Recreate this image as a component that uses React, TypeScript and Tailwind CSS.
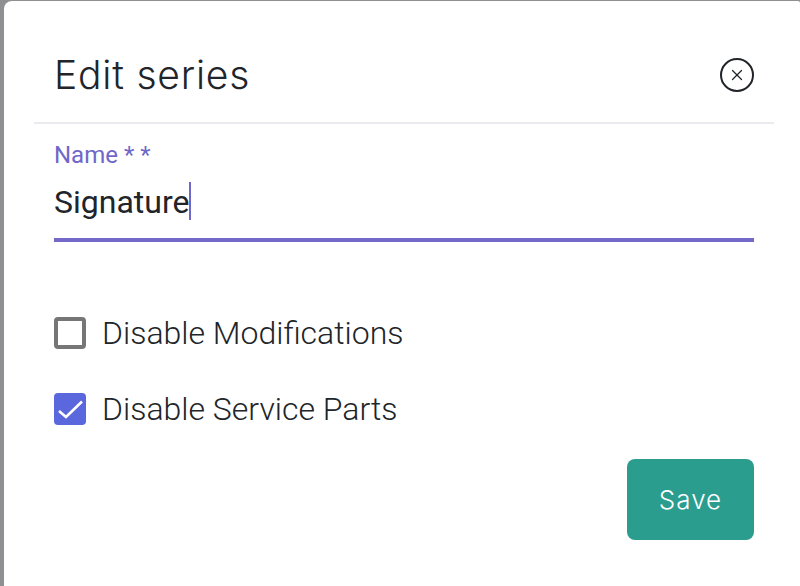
import React from 'react';
import { X } from 'lucide-react';

function CheckRow({ label, checked }: { label: string; checked: boolean }) {
  return (
    <label className="flex items-center h-[32px]">
      {checked ? (
        <span className="w-[32px] h-[32px] rounded-[4px] bg-[#5a67dd] flex items-center justify-center">
          <svg width="28" height="24" viewBox="0 0 28 24" fill="none">
            <path d="M3 14L10 20L26 4.5" stroke="#fff" strokeWidth="2.6" />
          </svg>
        </span>
      ) : (
        <span className="w-[32px] h-[32px] rounded-[4px] border-[4px] border-[#767676] bg-white" />
      )}
      <span className="ml-[16px] text-[32px] font-light text-[#212529] leading-none font-['Roboto',sans-serif]">
        {label}
      </span>
    </label>
  );
}

export default function App() {
  return (
    <div className="w-[800px] h-[586px] bg-[#8f9092] pl-[4px] pt-[1px] overflow-hidden">
      <div className="w-[796px] h-[585px] bg-white rounded-tl-[8px] rounded-tr-[2px] px-[30px] flex flex-col">
        <div className="h-[123px] border-b-2 border-[#eceaef] w-[740px] flex items-center justify-between px-[20px] pt-[27px]">
          <h1 className="text-[39px] font-light text-[#212529] tracking-[0.8px] font-['Inter',sans-serif]">Edit series</h1>
          <button className="w-[34px] h-[34px] rounded-full border-2 border-[#212529] flex items-center justify-center">
            <X className="w-[18px] h-[18px] text-[#212529]" strokeWidth={1.6} />
          </button>
        </div>
        <div className="pl-[20px] w-[720px] font-['Roboto',sans-serif]">
          <div className="mt-[17px] text-[24px] leading-[28px] text-[#6f67c9]">Name * *</div>
          <div className="mt-[8px] h-[65px] border-b-[4px] border-[#7469c9] flex items-start">
            <span className="text-[32px] leading-[50px] text-[#212529]">Signature</span>
            <span className="w-[2px] h-[38px] mt-[5px] bg-[#6f67c9]" />
          </div>
          <div className="mt-[75px] flex flex-col gap-[44px]">
            <CheckRow label="Disable Modifications" checked={false} />
            <CheckRow label="Disable Service Parts" checked={true} />
          </div>
          <div className="mt-[34px] flex justify-end">
            <button className="w-[127px] h-[81px] rounded-[8px] bg-[#2a9d8f] text-white text-[26px] tracking-[1px] font-light font-['Inter',sans-serif]">
              Save
            </button>
          </div>
        </div>
      </div>
    </div>
  );
}
